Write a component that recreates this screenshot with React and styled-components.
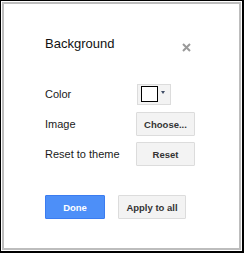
import styled, { createGlobalStyle } from "styled-components";

const Global = createGlobalStyle`
  html, body {
    margin: 0;
    padding: 0;
    background: #fff;
  }
  body {
    font-family: "Liberation Sans", Arial, sans-serif;
  }
`;

const Frame = styled.div`
  box-sizing: border-box;
  width: 244px;
  height: 253px;
  border-style: solid;
  border-color: #000;
  border-width: 1px 2px 2px 1px;
  padding: 1px;
  background: #fff;
`;

const Dialog = styled.div`
  box-sizing: border-box;
  height: 100%;
  border: 2px solid #bdbdbd;
  background: #fff;
  padding: 32px 44px 0 41px;
`;

const Header = styled.div`
  display: flex;
  justify-content: space-between;
  align-items: flex-start;
`;

const Title = styled.div`
  font-size: 13px;
  line-height: 16px;
  color: #111;
`;

const Close = styled.button`
  border: 0;
  background: none;
  padding: 0;
  margin: 7px 4px 0 0;
  width: 9px;
  height: 9px;
  display: flex;
  cursor: pointer;
`;

const Rows = styled.div`
  display: grid;
  grid-template-columns: 91px auto;
  grid-auto-rows: 24px;
  row-gap: 6px;
  margin-top: 30px;
  align-items: center;
`;

const Label = styled.div`
  font-size: 11px;
  color: #1a1a1a;
`;

const Control = styled.div`
  display: flex;
  align-items: center;
  padding-left: ${(p) => p.$indent || 0}px;
`;

const GrayButton = styled.button`
  box-sizing: border-box;
  height: 24px;
  width: ${(p) => p.$w}px;
  padding: 0;
  border: 1px solid #dcdcdc;
  border-radius: 1px;
  background: #f3f3f3;
  color: #333;
  font-family: "Liberation Sans", Arial, sans-serif;
  font-size: 9.5px;
  font-weight: bold;
  cursor: pointer;
`;

const ColorButton = styled.button`
  box-sizing: border-box;
  display: flex;
  align-items: center;
  gap: 3px;
  height: 21px;
  width: 34px;
  padding: 0 0 0 3px;
  border: 1px solid #dcdcdc;
  background: #f3f3f3;
  cursor: pointer;
`;

const Swatch = styled.span`
  box-sizing: border-box;
  width: 17px;
  height: 16px;
  border: 1px solid #000;
  background: ${(p) => p.$color};
`;

const Arrow = styled.span`
  width: 0;
  height: 0;
  margin-top: -4px;
  border-left: 2.5px solid transparent;
  border-right: 2.5px solid transparent;
  border-top: 3px solid #3f4d66;
`;

const Footer = styled.div`
  display: flex;
  gap: 13px;
  margin-top: 29px;
`;

const PrimaryButton = styled.button`
  box-sizing: border-box;
  height: 24px;
  width: 60px;
  padding: 0;
  border: 1px solid #3b7cf0;
  border-radius: 1px;
  background: #4d8ff8;
  color: #fff;
  font-family: "Liberation Sans", Arial, sans-serif;
  font-size: 9.5px;
  font-weight: bold;
  cursor: pointer;
`;

const CloseIcon = () => (
  <svg width="9" height="9" viewBox="0 0 9 9">
    <path d="M1 1 L8 8 M8 1 L1 8" stroke="#9a9a9a" strokeWidth="2" />
  </svg>
);

export default function App() {
  return (
    <>
      <Global />
      <Frame>
        <Dialog>
          <Header>
            <Title>Background</Title>
            <Close aria-label="Close">
              <CloseIcon />
            </Close>
          </Header>
          <Rows>
            <Label>Color</Label>
            <Control $indent={1}>
              <ColorButton>
                <Swatch $color="#fff" />
                <Arrow />
              </ColorButton>
            </Control>
            <Label>Image</Label>
            <Control>
              <GrayButton $w={59}>Choose...</GrayButton>
            </Control>
            <Label>Reset to theme</Label>
            <Control>
              <GrayButton $w={59}>Reset</GrayButton>
            </Control>
          </Rows>
          <Footer>
            <PrimaryButton>Done</PrimaryButton>
            <GrayButton $w={68}>Apply to all</GrayButton>
          </Footer>
        </Dialog>
      </Frame>
    </>
  );
}
